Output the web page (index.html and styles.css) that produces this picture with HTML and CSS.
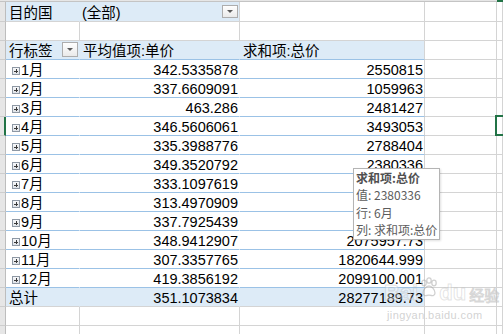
FILE: index.html
```html
<!DOCTYPE html>
<html lang="zh">
<head>
<meta charset="utf-8">
<title>数据透视表</title>
<link rel="stylesheet" href="styles.css">
</head>
<body>
<div class="sheet">
  <div class="colhead"><div class="ch"></div><div class="ch-act"></div></div>

  <div class="row r1">
    <div class="rh"></div>
    <div class="c a pf">目的国</div>
    <div class="c b pf"><span class="ptxt">(全部)</span>
      <svg class="dd dd-sm" width="16" height="13" viewBox="0 0 16 13"><rect x="0.5" y="0.5" width="15" height="12" fill="url(#g1)" stroke="#adadad"/><path d="M5 5h6l-3 3z" fill="#5a5a5a"/><defs><linearGradient id="g1" x1="0" y1="0" x2="0" y2="1"><stop offset="0" stop-color="#ffffff"/><stop offset="1" stop-color="#e9e9e9"/></linearGradient></defs></svg>
    </div>
    <div class="c cc"></div>
    <div class="c d"></div>
    <div class="c e"></div>
  </div>

  <div class="row">
    <div class="rh"></div>
    <div class="c a"></div>
    <div class="c b"></div>
    <div class="c cc"></div>
    <div class="c d"></div>
    <div class="c e"></div>
  </div>

  <div class="row">
    <div class="rh"></div>
    <div class="c a ph"><span>行标签</span>
      <svg class="dd dd-lg" width="16" height="15" viewBox="0 0 16 15"><rect x="0.5" y="0.5" width="15" height="14" fill="url(#g2)" stroke="#adadad"/><path d="M5 6h6l-3 3z" fill="#5a5a5a"/><defs><linearGradient id="g2" x1="0" y1="0" x2="0" y2="1"><stop offset="0" stop-color="#ffffff"/><stop offset="1" stop-color="#e9e9e9"/></linearGradient></defs></svg>
    </div>
    <div class="c b ph">平均值项:单价</div>
    <div class="c cc ph phc">求和项:总价</div>
    <div class="c d"></div>
    <div class="c e"></div>
  </div>

  <div class="row"><div class="rh"></div><div class="c a pd"><i class="xp"></i>1月</div><div class="c b pd num">342.5335878</div><div class="c cc pd pdc num">2550815</div><div class="c d"></div><div class="c e"></div></div>
  <div class="row"><div class="rh"></div><div class="c a pd"><i class="xp"></i>2月</div><div class="c b pd num">337.6609091</div><div class="c cc pd pdc num">1059963</div><div class="c d"></div><div class="c e"></div></div>
  <div class="row"><div class="rh"></div><div class="c a pd"><i class="xp"></i>3月</div><div class="c b pd num">463.286</div><div class="c cc pd pdc num">2481427</div><div class="c d"></div><div class="c e"></div></div>
  <div class="row"><div class="rh rh-act"></div><div class="c a pd"><i class="xp"></i>4月</div><div class="c b pd num">346.5606061</div><div class="c cc pd pdc num">3493053</div><div class="c d"></div><div class="c e active"></div></div>
  <div class="row"><div class="rh"></div><div class="c a pd"><i class="xp"></i>5月</div><div class="c b pd num">335.3988776</div><div class="c cc pd pdc num">2788404</div><div class="c d"></div><div class="c e"></div></div>
  <div class="row"><div class="rh"></div><div class="c a pd"><i class="xp"></i>6月</div><div class="c b pd num">349.3520792</div><div class="c cc pd pdc num">2380336</div><div class="c d"></div><div class="c e"></div></div>
  <div class="row"><div class="rh"></div><div class="c a pd"><i class="xp"></i>7月</div><div class="c b pd num">333.1097619</div><div class="c cc pd pdc num"></div><div class="c d"></div><div class="c e"></div></div>
  <div class="row"><div class="rh"></div><div class="c a pd"><i class="xp"></i>8月</div><div class="c b pd num">313.4970909</div><div class="c cc pd pdc num"></div><div class="c d"></div><div class="c e"></div></div>
  <div class="row"><div class="rh"></div><div class="c a pd"><i class="xp"></i>9月</div><div class="c b pd num">337.7925439</div><div class="c cc pd pdc num"></div><div class="c d"></div><div class="c e"></div></div>
  <div class="row"><div class="rh"></div><div class="c a pd"><i class="xp"></i>10月</div><div class="c b pd num">348.9412907</div><div class="c cc pd pdc num">2075957.73</div><div class="c d"></div><div class="c e"></div></div>
  <div class="row"><div class="rh"></div><div class="c a pd"><i class="xp"></i>11月</div><div class="c b pd num">307.3357765</div><div class="c cc pd pdc num">1820644.999</div><div class="c d"></div><div class="c e"></div></div>
  <div class="row"><div class="rh"></div><div class="c a pd"><i class="xp"></i>12月</div><div class="c b pd num">419.3856192</div><div class="c cc pd pdc num">2099100.001</div><div class="c d"></div><div class="c e"></div></div>
  <div class="row"><div class="rh"></div><div class="c a pt">总计</div><div class="c b pt num">351.1073834</div><div class="c cc pt ptc num">28277189.73</div><div class="c d"></div><div class="c e"></div></div>

  <div class="row">
    <div class="rh"></div>
    <div class="c a"></div>
    <div class="c b"></div>
    <div class="c cc"></div>
    <div class="c d"></div>
    <div class="c e"></div>
  </div>
  <div class="row">
    <div class="rh"></div>
    <div class="c a"></div>
    <div class="c b"></div>
    <div class="c cc"></div>
    <div class="c d"></div>
    <div class="c e"></div>
  </div>

  <div class="tip">
    <div class="tip-t">求和项:总价</div>
    <div>值: 2380336</div>
    <div>行: 6月</div>
    <div>列: 求和项:总价</div>
  </div>

  <div class="wm">
    <div class="wm-top">
      <span class="wm-bai">Bai</span>
      <svg class="wm-paw" width="20" height="20" viewBox="0 0 20 20"><g fill="none" stroke="rgba(170,170,170,0.55)" stroke-width="1.3"><ellipse cx="5" cy="6" rx="2.2" ry="2.8"/><ellipse cx="10" cy="3.5" rx="2.2" ry="2.7"/><ellipse cx="15" cy="6" rx="2.2" ry="2.8"/><path d="M10 9c-3 0-6 4-6 7 0 2 2 3 3.5 2.5 1.5-.4 3.5-.4 5 0 1.5.5 3.5-.5 3.5-2.5 0-3-3-7-6-7z"/></g></svg>
      <span class="wm-du">du</span>
      <span class="wm-jy">经验</span>
    </div>
    <div class="wm-url">jingyan.baidu.com</div>
  </div>
</div>
</body>
</html>
```

FILE: styles.css
```css
html, body {
  margin: 0;
  padding: 0;
  background: #ffffff;
}

.sheet {
  position: relative;
  width: 503px;
  height: 334px;
  overflow: hidden;
  font-family: "Liberation Sans", "Noto Sans CJK SC", sans-serif;
  font-size: 14.5px;
  color: #000000;
}

.colhead {
  display: flex;
  height: 2px;
}
.ch {
  flex: none;
  width: 497px;
  height: 1px;
  background: #e6e6e6;
  border-bottom: 1px solid #c4c4c4;
}
.ch-act {
  flex: 1;
  height: 2px;
  background: #217346;
}

.row {
  display: flex;
  height: 19px;
}
.row.r1 {
  height: 20px;
}

.rh {
  flex: none;
  box-sizing: border-box;
  width: 6px;
  height: 100%;
  background: #e6e6e6;
  border-right: 1px solid #bdbdbd;
  border-bottom: 1px solid #cdcdcd;
}
.rh-act {
  border-right: 2px solid #217346;
}

.c {
  flex: none;
  box-sizing: border-box;
  height: 100%;
  display: flex;
  align-items: flex-end;
  padding: 0 1px 0 3px;
  line-height: 16px;
  white-space: nowrap;
  border-right: 1px solid #d4d4d4;
  border-bottom: 1px solid #d4d4d4;
  background: #ffffff;
}
.a { width: 74px; }
.b { width: 160px; }
.cc { width: 185px; }
.d { width: 72px; }
.e { flex: 1; min-width: 0; }

.num {
  justify-content: flex-end;
}

/* report filter */
.pf {
  background: #ddebf7;
}
.a.pf {
  border-right-color: #ddebf7;
}
.ptxt {
  margin-left: -1px;
}

/* header row */
.ph {
  background: #ddebf7;
  border-bottom-color: #9bc2e6;
}
.a.ph, .b.ph {
  border-right-color: #ddebf7;
}

/* data rows */
.pd {
  border-bottom-color: #9bc2e6;
}
.a.pd, .b.pd {
  border-right-color: #ffffff;
}

/* total row */
.pt {
  background: #ddebf7;
}
.a.pt, .b.pt {
  border-right-color: #ddebf7;
}

.dd {
  display: block;
  margin-left: auto;
  align-self: flex-start;
  flex: none;
}
.dd-sm {
  margin-top: 3px;
}
.dd-lg {
  margin-top: 1px;
}

.xp {
  flex: none;
  box-sizing: border-box;
  width: 8px;
  height: 8px;
  margin: 0 1px 3px 3px;
  border: 1px solid #8e98a4;
  background:
    linear-gradient(#3a3a3a, #3a3a3a) center / 4px 1px no-repeat,
    linear-gradient(#3a3a3a, #3a3a3a) center / 1px 4px no-repeat,
    linear-gradient(#f7f8fa, #dfe3e8);
}

.active {
  position: relative;
}
.active::after {
  content: "";
  position: absolute;
  left: -2px;
  top: -2px;
  right: -4px;
  bottom: -1px;
  border: 2px solid #217346;
}

/* tooltip */
.tip {
  position: absolute;
  left: 353px;
  top: 168px;
  box-sizing: border-box;
  width: 87px;
  height: 72px;
  padding: 0 0 0 2px;
  background: #ffffff;
  border: 1px solid #b4b4b4;
  box-shadow: 1px 1px 2px rgba(0, 0, 0, 0.12);
  font-family: "Noto Sans CJK SC", "Liberation Sans", sans-serif;
  font-size: 12px;
  line-height: 17.3px;
  color: #5c5c5c;
  white-space: nowrap;
}
.tip-t {
  font-weight: bold;
  color: #505050;
}

/* watermark */
.wm {
  position: absolute;
  left: 384px;
  top: 277px;
  pointer-events: none;
}
.wm-top {
  display: flex;
  align-items: flex-end;
  height: 28px;
}
.wm-bai, .wm-du {
  font-family: "Liberation Sans", sans-serif;
  font-weight: bold;
  font-size: 22px;
  line-height: 24px;
  color: rgba(255, 255, 255, 0.35);
  -webkit-text-stroke: 1px rgba(175, 175, 175, 0.35);
}
.wm-paw {
  display: block;
  margin: 0 0 8px 1px;
}
.wm-jy {
  margin-left: 3px;
  font-family: "Noto Sans CJK SC", sans-serif;
  font-size: 15px;
  line-height: 20px;
  color: rgba(255, 255, 255, 0.5);
  -webkit-text-stroke: 1px rgba(175, 175, 175, 0.5);
}
.wm-url {
  margin-top: 4px;
  margin-left: 3px;
  font-family: "Liberation Sans", sans-serif;
  font-size: 11px;
  line-height: 12px;
  letter-spacing: 0.4px;
  color: rgba(190, 190, 190, 0.7);
}
```
